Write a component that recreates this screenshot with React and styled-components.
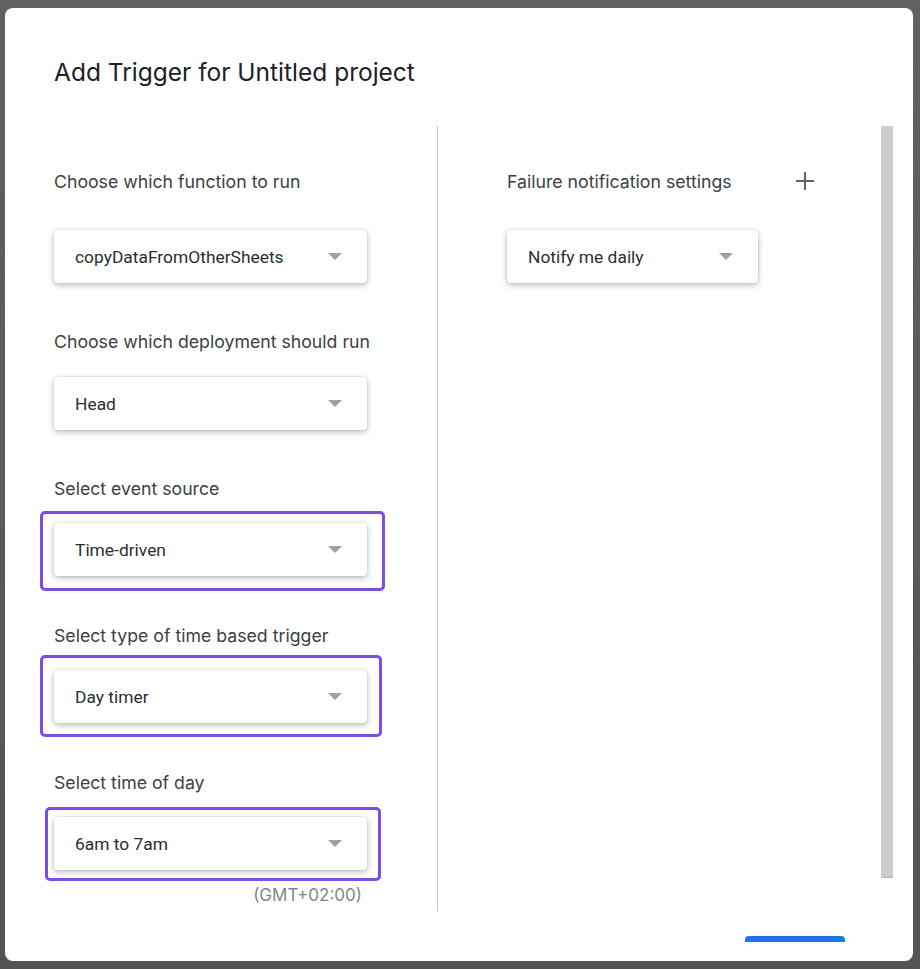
import React from "react"
import styled, { createGlobalStyle } from "styled-components"

const Global = createGlobalStyle`
  html, body {
    margin: 0;
    padding: 0;
    background: #5a5a5a;
  }
  body {
    font-family: Roboto, "Liberation Sans", sans-serif;
  }
`

const Backdrop = styled.div`
  width: 920px;
  height: 969px;
  box-sizing: border-box;
  padding: 8px 7px 8px 5px;
  background: linear-gradient(#616161, #535353);
`

const Dialog = styled.div`
  height: 100%;
  background: #fff;
  border-radius: 8px;
  display: flex;
  flex-direction: column;
  overflow: hidden;
`

const Title = styled.h2`
  margin: 0;
  padding: 49px 0 0 49px;
  height: 68px;
  box-sizing: border-box;
  font-family: Inter, Roboto, sans-serif;
  font-weight: 400;
  font-size: 24.5px;
  line-height: 30px;
  color: #202124;
`

const Body = styled.div`
  display: flex;
  height: 785px;
  margin-top: 50px;
`

const LeftCol = styled.div`
  width: 383px;
  padding-left: 49px;
  border-right: 1px solid #c8c8c8;
  display: flex;
  flex-direction: column;
`

const RightCol = styled.div`
  flex: 1;
  padding-left: 69px;
  display: flex;
  flex-direction: column;
`

const Scrollbar = styled.div`
  width: 12px;
  height: 751px;
  margin-right: 20px;
  background: #cbcbcb;
  border-bottom: 1px solid #b8b8b8;
`

const LabelRow = styled.div`
  display: flex;
  align-items: center;
  height: 24px;
  margin-top: ${(p) => p.$top}px;
  width: ${(p) => (p.$width ? p.$width + "px" : "auto")};
  justify-content: space-between;
`

const Label = styled.span`
  font-family: Inter, Roboto, sans-serif;
  font-size: 17.7px;
  color: #3c4043;
`

const Field = styled.div`
  position: relative;
  margin-top: ${(p) => p.$top}px;
`

const Select = styled.div`
  width: ${(p) => p.$width}px;
  height: 53px;
  box-sizing: border-box;
  padding: 0 25px 0 21px;
  display: flex;
  align-items: center;
  justify-content: space-between;
  background: #fff;
  border-radius: 4px;
  box-shadow: 0 2px 6px rgba(0, 0, 0, 0.28), 0 0 2px rgba(0, 0, 0, 0.12);
  font-size: 17.4px;
  color: #2b2d30;
`

const Arrow = styled.span`
  width: 0;
  height: 0;
  border-left: 7px solid transparent;
  border-right: 7px solid transparent;
  border-top: 7px solid #a0a0a0;
`

const Highlight = styled.div`
  position: absolute;
  left: ${(p) => p.$l}px;
  top: ${(p) => p.$t}px;
  width: ${(p) => p.$w}px;
  height: ${(p) => p.$h}px;
  box-sizing: border-box;
  border: 3px solid #7b4ee8;
  border-radius: 5px;
  pointer-events: none;
`

const Hint = styled.div`
  width: 308px;
  text-align: right;
  margin-top: 15px;
  font-family: Inter, Roboto, sans-serif;
  font-size: 17px;
  color: #80868b;
`

const Footer = styled.div`
  flex: 1;
  display: flex;
  justify-content: flex-end;
  align-items: flex-end;
  padding-right: 68px;
`

const PrimaryButton = styled.div`
  width: 100px;
  height: 6px;
  margin-bottom: 19px;
  background: #1a73e8;
  border-radius: 4px 4px 0 0;
`

const Plus = () => (
  <svg width="20" height="20" viewBox="0 0 20 20">
    <path d="M10 1v18M1 10h18" stroke="#5f6368" strokeWidth="2" />
  </svg>
)

const Dropdown = ({ value, width = 313 }) => (
  <Select $width={width}>
    <span>{value}</span>
    <Arrow />
  </Select>
)

export default function App() {
  return (
    <>
      <Global />
      <Backdrop>
        <Dialog>
          <Title>Add Trigger for Untitled project</Title>
          <Body>
            <LeftCol>
              <LabelRow $top={43}>
                <Label>Choose which function to run</Label>
              </LabelRow>
              <Field $top={37}>
                <Dropdown value="copyDataFromOtherSheets" />
              </Field>

              <LabelRow $top={46}>
                <Label>Choose which deployment should run</Label>
              </LabelRow>
              <Field $top={24}>
                <Dropdown value="Head" />
              </Field>

              <LabelRow $top={46}>
                <Label>Select event source</Label>
              </LabelRow>
              <Field $top={23}>
                <Dropdown value="Time-driven" />
                <Highlight $l={-14} $t={-12} $w={345} $h={80} />
              </Field>

              <LabelRow $top={47}>
                <Label>Select type of time based trigger</Label>
              </LabelRow>
              <Field $top={23}>
                <Dropdown value="Day timer" />
                <Highlight $l={-14} $t={-15} $w={342} $h={82} />
              </Field>

              <LabelRow $top={47}>
                <Label>Select time of day</Label>
              </LabelRow>
              <Field $top={23}>
                <Dropdown value="6am to 7am" />
                <Highlight $l={-9} $t={-10} $w={336} $h={74} />
              </Field>
              <Hint>(GMT+02:00)</Hint>
            </LeftCol>

            <RightCol>
              <LabelRow $top={43} $width={308}>
                <Label>Failure notification settings</Label>
                <Plus />
              </LabelRow>
              <Field $top={37}>
                <Dropdown value="Notify me daily" width={251} />
              </Field>
            </RightCol>

            <Scrollbar />
          </Body>
          <Footer>
            <PrimaryButton />
          </Footer>
        </Dialog>
      </Backdrop>
    </>
  )
}
